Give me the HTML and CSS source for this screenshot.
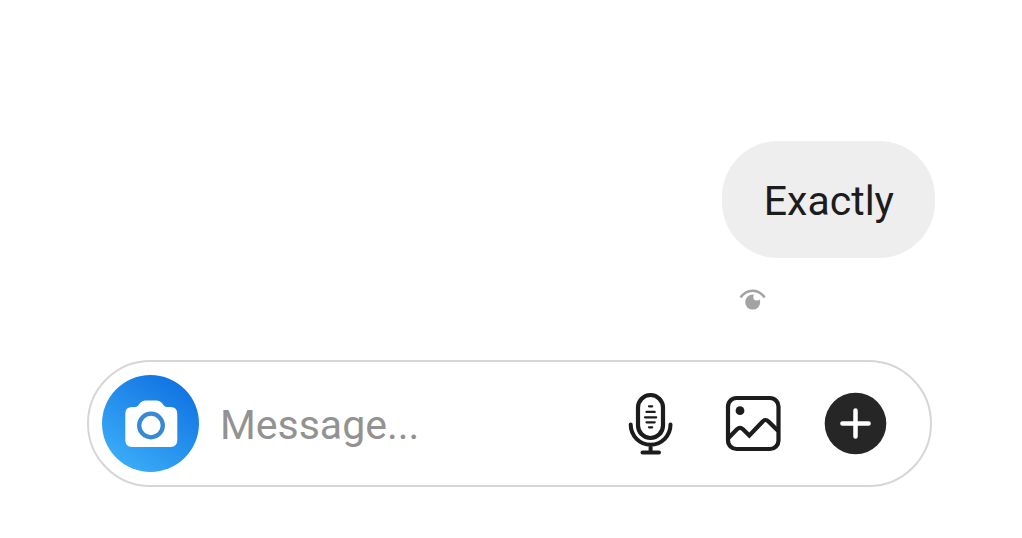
FILE: index.html
```html
<!DOCTYPE html>
<html lang="en">
<head>
    <meta charset="UTF-8">
    <meta name="viewport" content="width=device-width, initial-scale=1.0">
    <title>Messages</title>
    <link rel="stylesheet" href="styles.css">
</head>
<body>
    <main class="chat">
        <div class="message">
            <p class="message-bubble">Exactly</p>
            <svg class="seen-icon" viewBox="0 0 28 24" role="img" aria-label="Seen">
                <circle cx="13.7" cy="14.1" r="7.5" fill="#a3a3a3"/>
                <circle cx="17.8" cy="9" r="3.5" fill="#fff"/>
                <path d="M1.500 9.500Q6.500 2.700 13.600 2.700T25.700 9.500" fill="none" stroke="#a3a3a3" stroke-width="2.4"/>
            </svg>
        </div>

        <form class="composer">
            <button type="button" class="camera-btn" aria-label="Camera">
                <svg viewBox="0 0 97 97">
                    <path d="M30 32H33Q35.500 32 37 29.500L38 28Q40 25.500 43 25.500H55Q58 25.500 60 28L61 29.500Q62.500 32 65 32H68.500Q75.300 32 75.300 39V65Q75.300 72 68.500 72H30Q23.300 72 23.300 65V39Q23.300 32 30 32Z" fill="#fff"/>
                    <circle cx="49" cy="50.5" r="11.800" fill="#fff" stroke="#3689d2" stroke-width="4.300"/>
                </svg>
            </button>

            <input type="text" class="message-input" placeholder="Message..." aria-label="Message">

            <div class="actions">
                <button type="button" class="icon-btn" aria-label="Voice message">
                    <svg viewBox="0 0 61 61" fill="none" stroke="#1c1c1c" stroke-linecap="round">
                        <rect x="17" y="2" width="25" height="43" rx="12.5" stroke-width="4.2"/>
                        <path d="M9.700 31.500a19.900 20.200 0 0 0 39.800 0M29.600 52v7M21.500 59.500h16.500" stroke-width="4"/>
                        <path d="M28 13.300h3.200M25.500 18.900h8.200M24 24.300h11.200M25.500 29.300h8.200M28 34.300h3.200" stroke-width="2.2"/>
                    </svg>
                </button>
                <button type="button" class="icon-btn" aria-label="Photo">
                    <svg viewBox="0 0 61 61" fill="none" stroke="#1c1c1c" stroke-width="4.2">
                        <rect x="5" y="5" width="50.5" height="51" rx="8.5"/>
                        <path d="M5 45.500L14 36.300Q17 33.500 20 36.300L26.300 42.500L39.700 28.500Q42.500 25.500 45.500 28.500L55 37.700"/>
                        <circle cx="17" cy="17.700" r="4.400" fill="#1c1c1c" stroke="none"/>
                    </svg>
                </button>
                <button type="button" class="icon-btn" aria-label="More">
                    <svg viewBox="0 0 61 61">
                        <circle cx="30.5" cy="30.5" r="30.8" fill="#262626"/>
                        <path d="M30.500 17.400V43.600M17.400 30.500H43.600" stroke="#fff" stroke-width="4.500" stroke-linecap="round"/>
                    </svg>
                </button>
            </div>
        </form>
    </main>
</body>
</html>
```

FILE: styles.css
```css
* {
    box-sizing: border-box;
    margin: 0;
    padding: 0;
}

body {
    font-family: Roboto, "Liberation Sans", sans-serif;
    font-size: 41px;
    line-height: 49px;
    background-color: #fff;
    color: #1c1c1c;
}

button {
    border: none;
    background: none;
    cursor: pointer;
    flex-shrink: 0;
}

svg {
    display: block;
    overflow: visible;
}

.chat {
    display: flex;
    flex-direction: column;
    gap: 48px;
    padding: 141px 87px 48px;
}

.message {
    align-self: flex-end;
    display: flex;
    flex-direction: column;
    gap: 30px;
}

.message-bubble {
    padding: 36px 41px 32px 42px;
    border-radius: 56px;
    background-color: #eee;
}

.seen-icon {
    width: 28px;
    height: 24px;
    margin-left: 17px;
}

.composer {
    display: flex;
    align-items: center;
    gap: 21px;
    margin-right: 3px;
    padding: 13px 44px 13px 13px;
    border: 2px solid #d6d6d6;
    border-radius: 64px;
    background-color: #fff;
}

.camera-btn {
    width: 97px;
    height: 97px;
    border-radius: 50%;
    background: linear-gradient(35deg, #3aacf8 12%, #1173e2 88%);
}

.message-input {
    flex: 1;
    min-width: 0;
    padding-top: 4px;
    border: none;
    outline: none;
    background: none;
    font: inherit;
    color: inherit;
}

.message-input::placeholder {
    color: #929292;
    opacity: 1;
}

.actions {
    display: flex;
    gap: 41px;
}

.icon-btn {
    width: 61px;
    height: 61px;
}
```
